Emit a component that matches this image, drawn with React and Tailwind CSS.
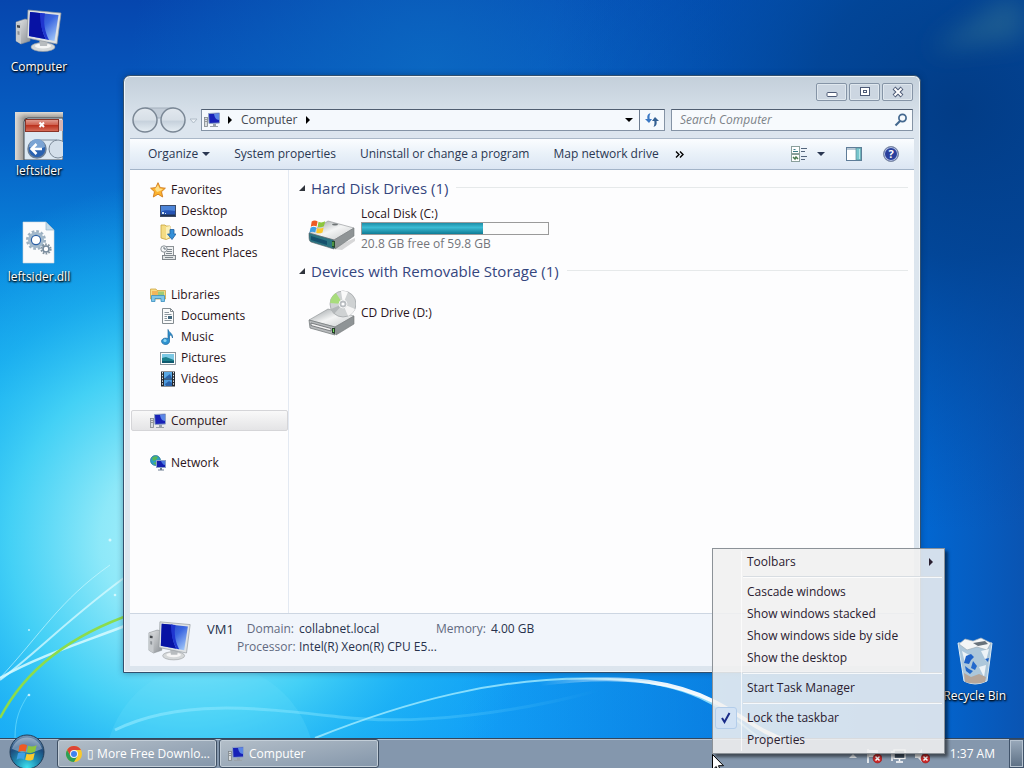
import { useState } from 'react'

const libraries = [
    { name: 'Favorites', icon: StarIcon },
    { name: 'Desktop', icon: DesktopIcon, child: true },
    { name: 'Downloads', icon: DownloadsIcon, child: true },
    { name: 'Recent Places', icon: RecentIcon, child: true },
    { name: 'Libraries', icon: LibrariesIcon, first: true },
    { name: 'Documents', icon: DocumentIcon, child: true },
    { name: 'Music', icon: MusicIcon, child: true },
    { name: 'Pictures', icon: PicturesIcon, child: true },
    { name: 'Videos', icon: VideosIcon, child: true },
    { name: 'Computer', icon: SmallComputer, first: true },
    { name: 'Network', icon: NetworkIcon, first: true },
]

function Wallpaper() {
    return (
        <svg className="absolute inset-0 w-full h-full" viewBox="0 0 1024 768" preserveAspectRatio="none" aria-hidden="true">
            <defs>
                <linearGradient id="sky" x1="0" y1="0" x2="0" y2="1">
                    <stop offset="0" stopColor="#0646ae" />
                    <stop offset="0.18" stopColor="#0660c4" />
                    <stop offset="0.36" stopColor="#0a8ae0" />
                    <stop offset="0.52" stopColor="#14a8f0" />
                    <stop offset="1" stopColor="#129ff8" />
                </linearGradient>
                <linearGradient id="skyRight" x1="0" y1="0" x2="1" y2="0">
                    <stop offset="0.45" stopColor="#0262d0" stopOpacity="0" />
                    <stop offset="0.9" stopColor="#0164d0" stopOpacity="0.95" />
                    <stop offset="1" stopColor="#0a54b2" />
                </linearGradient>
                <radialGradient id="dark" gradientUnits="userSpaceOnUse" cx="960" cy="110" r="420">
                    <stop offset="0" stopColor="#023c86" />
                    <stop offset="0.35" stopColor="#02418f" stopOpacity="0.85" />
                    <stop offset="1" stopColor="#034ba6" stopOpacity="0" />
                </radialGradient>
                <radialGradient id="top" gradientUnits="userSpaceOnUse" cx="430" cy="70" r="300">
                    <stop offset="0" stopColor="#0c6cc4" stopOpacity="0.8" />
                    <stop offset="1" stopColor="#0c6cc4" stopOpacity="0" />
                </radialGradient>
                <radialGradient id="glow" gradientUnits="userSpaceOnUse" cx="190" cy="540" r="360">
                    <stop offset="0" stopColor="#b4f4fc" />
                    <stop offset="0.25" stopColor="#94ecf9" stopOpacity="0.95" />
                    <stop offset="0.5" stopColor="#4cd8f6" stopOpacity="0.85" />
                    <stop offset="0.72" stopColor="#26c0f4" stopOpacity="0.5" />
                    <stop offset="1" stopColor="#1cb4f2" stopOpacity="0" />
                </radialGradient>
                <linearGradient id="ribbon" gradientUnits="userSpaceOnUse" x1="540" y1="0" x2="740" y2="0">
                    <stop offset="0" stopColor="#fff" stopOpacity="0" />
                    <stop offset="0.6" stopColor="#fff" stopOpacity="0.9" />
                    <stop offset="1" stopColor="#fff" />
                </linearGradient>
                <linearGradient id="streak" gradientUnits="userSpaceOnUse" x1="115" y1="0" x2="600" y2="0">
                    <stop offset="0" stopColor="#8ce8ff" stopOpacity="0.7" />
                    <stop offset="1" stopColor="#8ce8ff" stopOpacity="0" />
                </linearGradient>
                <filter id="soft" x="-50%" y="-50%" width="200%" height="200%"><feGaussianBlur stdDeviation="12" /></filter>
                <filter id="soft1"><feGaussianBlur stdDeviation="0.6" /></filter>
            </defs>
            <rect width="1024" height="768" fill="url(#sky)" />
            <rect width="1024" height="768" fill="url(#skyRight)" />
            <rect width="1024" height="768" fill="url(#top)" />
            <rect width="1024" height="768" fill="url(#dark)" />
            <rect width="1024" height="768" fill="url(#glow)" />
            <path d="M930 50L1000 0H1024V40Z" fill="#4c8a94" opacity="0.35" filter="url(#soft)" />
            <circle cx="210" cy="768" r="105" fill="#6fe0fa" opacity="0.22" />
            <g fill="none" filter="url(#soft1)">
                <path d="M0 678C40 655 90 640 135 622" stroke="#d8fbff" strokeWidth="2.5" opacity="0.85" />
                <path d="M0 680C40 650 75 612 135 570" stroke="#d8fbff" strokeWidth="2" opacity="0.75" />
                <path d="M0 678C40 635 60 600 110 565" stroke="#d8fbff" strokeWidth="1" opacity="0.6" />
                <path d="M0 718C25 670 70 635 135 613" stroke="#8cdc4c" strokeWidth="2.5" />
                <path d="M115 730C180 698 260 708 340 717S520 712 600 690" stroke="url(#streak)" strokeWidth="3" />
                <path d="M315 738C400 704 500 674 610 679S740 730 770 745" stroke="#a4ecff" strokeWidth="2" opacity="0.8" />
                <path d="M540 684C630 672 680 684 715 702S755 730 790 742" stroke="url(#ribbon)" strokeWidth="4" />
                <path d="M15 738C15 718 20 708 28 695" stroke="#7ce4ff" strokeWidth="1" opacity="0.6" />
            </g>
            <g fill="#e6fdff" opacity="0.8">
                <circle cx="29" cy="630" r="1" />
                <circle cx="29" cy="695" r="1.3" />
                <circle cx="115" cy="595" r="1.3" />
                <circle cx="110" cy="540" r="1.5" />
            </g>
        </svg>
    )
}

function BigComputer({ className }) {
    return (
        <svg className={className} viewBox="0 0 48 48" aria-hidden="true">
            <defs>
                <linearGradient id="screen" x1="0" y1="0" x2="1" y2="1">
                    <stop offset="0" stopColor="#2038b8" />
                    <stop offset="0.5" stopColor="#3a66e0" />
                    <stop offset="1" stopColor="#b4d8fc" />
                </linearGradient>
                <linearGradient id="metal" x1="0" y1="0" x2="1" y2="1">
                    <stop offset="0" stopColor="#e8eaeb" />
                    <stop offset="1" stopColor="#8a8f94" />
                </linearGradient>
            </defs>
            <path d="M1 14L10 11L15 12V33L6 36L1 33Z" fill="url(#metal)" stroke="#868b90" strokeWidth="0.6" />
            <path d="M1 14L6 15V36L1 33Z" fill="#c6cacd" />
            <path d="M2 17L5 17.500V20L2 19.500Z" fill="#44484c" />
            <path d="M2.500 23L4.500 23.500V27L2.500 26.500Z" fill="#8b9095" />
            <ellipse cx="28" cy="39" rx="12" ry="4.500" fill="#d5d8d9" stroke="#94999c" strokeWidth="0.6" />
            <ellipse cx="28" cy="38" rx="8" ry="2.600" fill="#f6f6f6" />
            <path d="M24 31H33L32 38H25Z" fill="#b8bcbf" />
            <path d="M13 2L46 5L42 36L12 30Z" fill="#dfe2e4" stroke="#90969b" strokeWidth="0.7" />
            <path d="M15 4L43.500 7L39.500 33L14 28Z" fill="url(#screen)" />
            <path d="M15 4L27 5.300C25 15 27 24 31 31.300L14 28Z" fill="#0712a4" />
            <path d="M25 5L30 5.500C28 15 30 24 34 32L31 31.300C27 24 25 15 25 5Z" fill="#1f35cf" />
        </svg>
    )
}

function SmallComputer() {
    return (
        <svg className="w-4 h-4 shrink-0" viewBox="0 0 16 16" aria-hidden="true">
            <rect x="0.500" y="5.500" width="3" height="9" fill="#d8dcde" stroke="#7e858b" strokeWidth="0.8" />
            <path d="M1.500 7.500H2.500M1.500 9.500H2.500" stroke="#555" />
            <path d="M4.500 1.500L15.500 1V11L5 11.500Z" fill="#1822b8" stroke="#8fa3c4" />
            <path d="M10 2L15 1.500V8C12 8 10.500 5 10 2Z" fill="#5a86e6" />
            <path d="M9 12H12V14H14V15H6V14H9Z" fill="#9aa2aa" />
        </svg>
    )
}

function StarIcon() {
    return (
        <svg className="w-4 h-4 shrink-0" viewBox="0 0 16 16" aria-hidden="true">
            <path d="M8 .7L10.200 5.600L15.400 6.200L11.500 9.700L12.700 15L8 12.200L3.300 15L4.500 9.700L.6 6.200L5.800 5.600Z" fill="#fcb32e" stroke="#d07a1e" strokeWidth="0.9" />
            <path d="M8 3L9.500 6.600L13 7L10 9L7 10L5 7Z" fill="#ffe08a" />
        </svg>
    )
}

function DesktopIcon() {
    return (
        <svg className="w-4 h-4 shrink-0" viewBox="0 0 16 16" aria-hidden="true">
            <rect x="0.500" y="2.500" width="15" height="11" fill="#2654b4" stroke="#3c4a66" />
            <path d="M1 3H15V8C10 8 6 6 1 9Z" fill="#4c84d8" />
            <path d="M1 11.500H15V13H1Z" fill="#22324e" />
            <path d="M2 9H4V11H2ZM5 10H6V11H5Z" fill="#cfe4f6" />
        </svg>
    )
}

function DownloadsIcon() {
    return (
        <svg className="w-4 h-4 shrink-0" viewBox="0 0 16 16" aria-hidden="true">
            <path d="M1 1H5L6 2H10V14L6 15.500L1 14Z" fill="#f4dc84" stroke="#c8a33c" strokeWidth="0.8" />
            <path d="M6 3L10 2V13L6 15Z" fill="#fbf0b8" />
            <path d="M10 5.500H14V10H16L12 15.500L7.500 10H10Z" fill="#3490d8" stroke="#1f5f9f" strokeWidth="0.8" />
        </svg>
    )
}

function RecentIcon() {
    return (
        <svg className="w-4 h-4 shrink-0" viewBox="0 0 16 16" aria-hidden="true">
            <rect x="4.500" y="1.500" width="9" height="11" fill="#eef0f1" stroke="#8c9296" />
            <path d="M7 4.500H12M7 6.500H12M6 8.500H12" stroke="#7d868c" />
            <rect x="2.500" y="10.500" width="13" height="4" fill="#e1e4e5" stroke="#80878c" />
            <path d="M5 12.500H13" stroke="#7d868c" />
            <circle cx="4" cy="4" r="3.200" fill="#f6f8f9" stroke="#7f878d" strokeWidth="0.9" />
            <path d="M4 2V4H6" stroke="#4a5760" strokeWidth="0.8" fill="none" />
        </svg>
    )
}

function LibrariesIcon() {
    return (
        <svg className="w-4 h-4 shrink-0" viewBox="0 0 16 16" aria-hidden="true">
            <path d="M.5 2H6L7 3.500H15.500V12H.5Z" fill="#f6dd88" stroke="#cfa643" strokeWidth="0.8" />
            <path d="M2 4H8V9H2Z" fill="#f2b65a" />
            <path d="M8 4.500H14V9H8Z" fill="#9ecb76" />
            <path d="M1.500 14.500V8.500H14.500V14.500H11V11.500H5V14.500Z" fill="#7fc6e8" stroke="#3a8fc0" strokeWidth="0.8" />
        </svg>
    )
}

function DocumentIcon() {
    return (
        <svg className="w-4 h-4 shrink-0" viewBox="0 0 16 16" aria-hidden="true">
            <path d="M2.500 .5H10.500L13.500 3.500V15.500H2.500Z" fill="#fafbfb" stroke="#848c91" />
            <path d="M10.500 .5V3.500H13.500" fill="none" stroke="#848c91" />
            <path d="M4.500 4.500H9M4.500 6.500H11.500M4.500 8.500H7M4.500 10.500H7M4.500 12.500H11.500" stroke="#8d979e" />
            <rect x="8" y="8" width="4" height="3" fill="#41667c" />
        </svg>
    )
}

function MusicIcon() {
    return (
        <svg className="w-4 h-4 shrink-0" viewBox="0 0 16 16" aria-hidden="true">
            <path d="M8 .5C9 4 13 4 12.500 9C12 6.500 10.500 6 9.500 6V12A4 3.200 0 1 1 8 9.800Z" fill="#2f93d0" stroke="#1c669c" strokeWidth="0.7" />
            <circle cx="5" cy="11.500" r="1.600" fill="#8ad4f2" />
        </svg>
    )
}

function PicturesIcon() {
    return (
        <svg className="w-4 h-4 shrink-0" viewBox="0 0 16 16" aria-hidden="true">
            <rect x="0.500" y="2.500" width="15" height="12" fill="#fdfdfd" stroke="#8a949b" />
            <rect x="2" y="4" width="12" height="9" fill="#7cc8e4" />
            <path d="M2 8L6 7L14 10V13H2Z" fill="#1c7f8c" />
            <path d="M2 11H14V13H2Z" fill="#0f5a70" />
        </svg>
    )
}

function VideosIcon() {
    return (
        <svg className="w-4 h-4 shrink-0" viewBox="0 0 16 16" aria-hidden="true">
            <rect x="1" y="0.500" width="14" height="15" fill="#23282e" />
            <rect x="4" y="1" width="8" height="6.500" fill="#59a8e4" />
            <rect x="4" y="8.500" width="8" height="6.500" fill="#4c9ade" />
            <path d="M6 6L10 3L12 7.500H5ZM5 13L9 10L12 12V15H6Z" fill="#2a62a8" />
            <path d="M2.500 1V15M13.500 1V15" stroke="#e8ecef" strokeDasharray="1.500 1.300" />
        </svg>
    )
}

function NetworkIcon() {
    return (
        <svg className="w-4 h-4 shrink-0" viewBox="0 0 16 16" aria-hidden="true">
            <circle cx="5.500" cy="5.500" r="5" fill="#2c9fc4" stroke="#1c6c90" strokeWidth="0.7" />
            <path d="M2 3C4 1 6 1 8 2L6 5L3 6ZM3 8L6 7L6 10Z" fill="#58b558" />
            <rect x="6.500" y="5.500" width="9" height="7" fill="#141fae" stroke="#8ba0c6" />
            <path d="M11 6H15V10C13 10 12 8 11 6Z" fill="#4b78df" />
            <path d="M10 13H12V14.500H14V15.500H8V14.500H10Z" fill="#6f7f92" />
        </svg>
    )
}

function WindowsFlag({ x = 0, y = 0, size = 20 }) {
    return (
        <svg x={x} y={y} width={size} height={size} viewBox="0 0 20 20">
            <path d="M3 4C5 2.500 7.500 2.600 9.600 3.800L8.400 9.400C6.200 8.200 4 8.400 2 9.600Z" fill="#ee5a24" />
            <path d="M10.600 4.200C13 5.300 15.500 5 18 3.600L16.600 9.200C14.200 10.500 12 10.700 9.500 9.700Z" fill="#8cc63e" />
            <path d="M1.700 10.700C4 9.500 6 9.500 8.100 10.500L6.900 16C4.700 15 2.600 15 .5 16.300Z" fill="#3f9fe4" />
            <path d="M9.200 11C11.500 12 14 11.700 16.300 10.500L15 16C12.500 17.200 10.200 17.400 8 16.400Z" fill="#fcc92c" />
        </svg>
    )
}

function HardDisk() {
    return (
        <svg className="w-12 h-12 shrink-0" viewBox="0 0 48 48" aria-hidden="true">
            <defs>
                <linearGradient id="lid" x1="0" y1="0" x2="1" y2="1">
                    <stop offset="0.2" stopColor="#b9bdbf" />
                    <stop offset="0.5" stopColor="#f4f5f5" />
                    <stop offset="1" stopColor="#c4c7c9" />
                </linearGradient>
            </defs>
            <path d="M4 42L34 45L47 36V33L22 44Z" fill="#000" opacity="0.15" />
            <path d="M1 28L20 16L46 23L26 35Z" fill="url(#lid)" stroke="#8d9193" strokeWidth="0.6" />
            <ellipse cx="27" cy="19.500" rx="3" ry="1" fill="#6f7476" />
            <path d="M1 28L26 35V44L3 37C1 36 1 34 1 28Z" fill="#2c7482" stroke="#5b6264" strokeWidth="0.6" />
            <path d="M3 31L19 36V40L3 35Z" fill="#16506c" />
            <path d="M26 35L46 23V31L27 44Z" fill="#8f9496" stroke="#74797b" strokeWidth="0.6" />
            <path d="M24 36H27V43L24 42Z" fill="#25492a" />
            <path d="M25 37V41" stroke="#74e05c" />
            <WindowsFlag x={1} y={13} size={18} />
        </svg>
    )
}

function CdDrive() {
    return (
        <svg className="w-12 h-12 shrink-0" viewBox="0 0 48 48" aria-hidden="true">
            <path d="M1 31L20 20L46 27L27 38Z" fill="url(#lid)" stroke="#8a8e90" strokeWidth="0.6" />
            <path d="M1 31L27 38V46L2 39Z" fill="#b6b9bb" stroke="#6c7173" strokeWidth="0.7" />
            <path d="M3 34L23 39.500V42L3 36.500Z" fill="#f4f4f4" stroke="#55595b" strokeWidth="0.7" />
            <path d="M27 38L46 27V35L28 46Z" fill="#8f9496" stroke="#75797b" strokeWidth="0.6" />
            <path d="M24 39H27V45L24 44Z" fill="#243f28" />
            <path d="M25.500 40V43" stroke="#74e05c" />
            <circle cx="35" cy="15" r="13" fill="#cfd2d3" stroke="#9b9fa2" strokeWidth="0.7" />
            <path d="M35 15L28 4A13 13 0 0 0 22 14Z" fill="#a8dc7c" />
            <path d="M35 15L33 2A13 13 0 0 1 40 3Z" fill="#fafafa" />
            <path d="M35 15L47 20A13 13 0 0 1 40 27Z" fill="#f5f5f5" />
            <path d="M35 15L26 25A13 13 0 0 1 23 20Z" fill="#b3b7b9" />
            <circle cx="35" cy="15" r="4" fill="#b9bdc0" stroke="#f4f4f4" />
            <circle cx="35" cy="15" r="1.600" fill="#fff" />
        </svg>
    )
}

function LeftsiderIcon() {
    return (
        <svg className="w-12 h-12" viewBox="0 0 48 48" aria-hidden="true">
            <defs>
                <linearGradient id="ls" x1="0" y1="0" x2="1" y2="0">
                    <stop offset="0" stopColor="#dedbd6" />
                    <stop offset="0.2" stopColor="#8f8c88" />
                </linearGradient>
                <linearGradient id="lsTop" x1="0" y1="0" x2="0" y2="1">
                    <stop offset="0" stopColor="#dedbd6" />
                    <stop offset="0.13" stopColor="#dedbd6" stopOpacity="0.1" />
                </linearGradient>
                <linearGradient id="red" x1="0" y1="0" x2="0" y2="1">
                    <stop offset="0" stopColor="#e0a094" />
                    <stop offset="0.45" stopColor="#d0604e" />
                    <stop offset="0.5" stopColor="#bb3420" />
                    <stop offset="1" stopColor="#d8705c" />
                </linearGradient>
            </defs>
            <rect width="48" height="48" fill="url(#ls)" />
            <rect width="48" height="48" fill="url(#lsTop)" />
            <path d="M9 48V10Q9 6 13 6H48V48Z" fill="#dce8f2" stroke="#3e4850" />
            <rect x="10.500" y="7.500" width="33" height="12" fill="url(#red)" stroke="#8a3428" />
            <rect x="44" y="8" width="4" height="11" fill="#d8b4b0" />
            <path d="M24.500 10.500L29 15M29 10.500L24.500 15" stroke="#fff" strokeWidth="2" />
            <path d="M22 28H42" stroke="#9aa8b6" strokeWidth="1.500" />
            <circle cx="22" cy="37" r="9" fill="#2a62b0" stroke="#6c7f96" strokeWidth="1.500" />
            <path d="M14 35A8 8 0 0 1 30 35Q22 39 14 35Z" fill="#7ba4d4" />
            <path d="M17 37H27M21.500 32L16.500 37L21.500 42" stroke="#fff" strokeWidth="2.500" fill="none" />
            <circle cx="43" cy="37" r="9" fill="#d3dfea" stroke="#7b8998" />
        </svg>
    )
}

function DllIcon() {
    return (
        <svg className="w-12 h-12" viewBox="0 0 48 48" aria-hidden="true">
            <path d="M8 4H31L39 12V45H8Z" fill="#fafbfc" stroke="#d0d6db" strokeWidth="0.6" />
            <path d="M31 4V12H39Z" fill="#c4dbea" stroke="#93b4ca" strokeWidth="0.7" />
            <circle cx="21" cy="22" r="8.500" fill="none" stroke="#9db0c0" strokeWidth="3" strokeDasharray="2.600 1.850" />
            <circle cx="21" cy="22" r="6.500" fill="#eaf2f8" stroke="#a3b9cb" strokeWidth="3" />
            <circle cx="21" cy="22" r="4.600" fill="#fff" stroke="#2c5fa4" strokeWidth="1.200" />
            <circle cx="31" cy="31" r="4.600" fill="none" stroke="#8494a0" strokeWidth="2" strokeDasharray="1.700 1.190" />
            <circle cx="31" cy="31" r="3" fill="#fff" stroke="#75889a" strokeWidth="1.600" />
        </svg>
    )
}

function RecycleBinIcon() {
    return (
        <svg className="w-12 h-12" viewBox="0 0 48 48" aria-hidden="true">
            <path d="M7 6L41 6L36 44Q24 50 13 44Z" fill="#bcd0dc" fillOpacity="0.92" stroke="#dcebf4" />
            <path d="M8 7L14 2L22 4L30 1L40 6L36 13L26 10L16 13Z" fill="#f4f6f7" stroke="#9faeb8" strokeWidth="0.7" />
            <path d="M22 6L34 4L37 7L27 9Z" fill="#68727b" />
            <path d="M11 14L18 18L14 26ZM30 14L38 12L35 24ZM28 30L35 28L33 40Z" fill="#edf3f7" />
            <path d="M13 36L20 40L28 37L35 40L34 45Q24 48 14 45Z" fill="#b6a69a" />
            <path d="M15 19L20 17L23 20L20 23L18 27L13 26Z" fill="#1e62c8" />
            <path d="M22 24L26 29L24 33L20 31ZM14 29L18 32L22 34L19 37L15 34Z" fill="#2369cc" />
            <path d="M34 22L38 21L37 25Z" fill="#1e62c8" />
        </svg>
    )
}

function StartOrb() {
    return (
        <svg className="w-9 h-9" viewBox="0 0 36 36" aria-hidden="true">
            <defs>
                <radialGradient id="orb" cx="0.5" cy="0.95" r="0.95">
                    <stop offset="0" stopColor="#3fe0ee" />
                    <stop offset="0.35" stopColor="#1f8fb4" />
                    <stop offset="0.7" stopColor="#1c4a7c" />
                    <stop offset="1" stopColor="#7d9cba" />
                </radialGradient>
            </defs>
            <circle cx="18" cy="18" r="17" fill="url(#orb)" stroke="#1f3c58" />
            <path d="M3 15A15.500 15.500 0 0 1 33 15Q18 22 3 15Z" fill="#e5eef6" opacity="0.4" />
            <WindowsFlag x={7} y={7} size={23} />
        </svg>
    )
}

function ChromeIcon() {
    return (
        <svg className="w-4 h-4 shrink-0" viewBox="0 0 16 16" aria-hidden="true">
            <circle cx="8" cy="8" r="8" fill="#f9c92c" />
            <path d="M1.070 4A8 8 0 0 1 14.930 4H8L4.540 10Z" fill="#dc4437" />
            <path d="M1.070 4A8 8 0 0 0 8 16L11.460 10H4.540Z" fill="#2c9e57" />
            <circle cx="8" cy="8" r="4" fill="#f2f2f2" />
            <circle cx="8" cy="8" r="3" fill="#3f82f0" />
        </svg>
    )
}

function Arrow({ dir = 'down', className = '' }) {
    return (
        <svg className={`w-2 h-2 shrink-0 ${className}`} viewBox="0 0 8 8" aria-hidden="true">
            {dir === 'down' ? <path d="M0 2H8L4 6Z" fill="currentColor" /> : <path d="M2 0V8L6 4Z" fill="currentColor" />}
        </svg>
    )
}

function DesktopShortcut({ label, children, className = '' }) {
    return (
        <button className={`flex flex-col items-center text-white text-xs leading-4 whitespace-nowrap [text-shadow:0_1px_2px_#000,1px_1px_2px_#000] ${className}`}>
            {children}
            <span className="mt-[3px]">{label}</span>
        </button>
    )
}

function CaptionButton({ label, children }) {
    return (
        <button aria-label={label} className="w-[31px] h-[18px] flex items-center justify-center border border-[#8594a6] rounded-[2px] bg-[#ccd6e1] shadow-[inset_0_0_0_1px_#dfe7ee]">
            <svg className="w-3 h-3" viewBox="0 0 12 12" fill="none" stroke="#4d5a76" aria-hidden="true">{children}</svg>
        </button>
    )
}

function Explorer() {
    const [query, setQuery] = useState('')
    const [selected, setSelected] = useState('Computer')

    return (
        <section className="absolute left-[123px] right-[103px] top-[75px] bottom-[65px] flex flex-col border border-[#33506e] rounded-t-[7px] bg-[#d8e2ec] shadow-[inset_0_0_0_1px_#f0f6fa,0_0_6px_#00204060] bg-linear-to-b from-[#c3cfda] from-0% to-[#dce5ee] to-8%">
            <header className="pl-2 pr-[7px] pt-[7px]">
                <div className="flex justify-end gap-[2px]">
                    <CaptionButton label="Minimize"><rect x="1" y="6.500" width="10" height="4" rx="1" fill="#fff" /></CaptionButton>
                    <CaptionButton label="Maximize">
                        <rect x="1.500" y="1.500" width="9" height="8" fill="#fff" />
                        <rect x="4.500" y="4.500" width="3" height="2" />
                    </CaptionButton>
                    <CaptionButton label="Close">
                        <path d="M2 2L10 10M10 2L2 10" strokeWidth="4" />
                        <path d="M2.500 2.500L9.500 9.500M9.500 2.500L2.500 9.500" stroke="#fff" strokeWidth="2" />
                    </CaptionButton>
                </div>
                <div className="flex items-center h-[37px]">
                    <svg className="w-[69px] h-[28px] shrink-0" viewBox="0 0 69 28" fill="none" aria-hidden="true">
                        <defs>
                            <linearGradient id="nav" x1="0" y1="0" x2="0" y2="1">
                                <stop offset="0" stopColor="#e2e8ee" />
                                <stop offset="0.5" stopColor="#d7dfe7" />
                                <stop offset="0.55" stopColor="#c6d1dc" />
                                <stop offset="1" stopColor="#e6eef4" />
                            </linearGradient>
                        </defs>
                        <path d="M13 2H42V8L36 12H20Z" fill="#c2ccd7" stroke="#a4b0bd" />
                        <circle cx="13" cy="14" r="12" fill="url(#nav)" stroke="#7a8795" strokeWidth="1.500" />
                        <circle cx="41" cy="14" r="12" fill="url(#nav)" stroke="#7a8795" strokeWidth="1.500" />
                        <path d="M58 13H65L61.500 17Z" stroke="#b0bcc8" fill="#e9eff4" />
                    </svg>
                    <div className="flex-1 min-w-0 flex h-[22px] border border-[#8493a5] border-t-[#4f5d70] bg-[#f5f9fd]">
                        <button className="flex items-center pl-[2px]" aria-label="Location"><SmallComputer /></button>
                        <Arrow dir="right" className="ml-[6px] self-center text-black" />
                        <button className="ml-[7px] text-xs text-[#454a52]">Computer</button>
                        <Arrow dir="right" className="ml-[6px] self-center text-black" />
                        <button className="ml-auto px-[6px] text-black" aria-label="Previous locations"><Arrow /></button>
                        <button className="w-[25px] flex items-center justify-center border-l border-[#6d7c90]" aria-label="Refresh">
                            <svg className="w-4 h-4" viewBox="0 0 16 16" aria-hidden="true">
                                <path d="M6.500 1C3.500 2 3 4 3.500 7H1L5 11L8 7H5.700C5.300 5 5.500 3 6.500 1Z" fill="#3a78c4" />
                                <path d="M9.500 15C12.500 14 13 12 12.500 9H15L11 5L8 9H10.300C10.700 11 10.500 13 9.500 15Z" fill="#325f92" />
                            </svg>
                        </button>
                    </div>
                    <div className="ml-[6px] w-[242px] h-[22px] flex items-center border border-[#8493a5] border-t-[#4f5d70] bg-[#f7fafd]">
                        <input
                            type="text"
                            aria-label="Search Computer"
                            placeholder="Search Computer"
                            className="flex-1 min-w-0 px-2 text-xs italic bg-transparent outline-none placeholder:text-[#7c8288]"
                            value={query}
                            onChange={(e) => setQuery(e.target.value)}
                        />
                        <button className="pr-1" aria-label="Search">
                            <svg className="w-[14px] h-[14px]" viewBox="0 0 14 14" fill="none" stroke="#44688f" aria-hidden="true">
                                <circle cx="8.500" cy="5" r="3.600" strokeWidth="1.700" />
                                <path d="M6 8L1.500 12.500" strokeWidth="2.200" />
                            </svg>
                        </button>
                    </div>
                </div>
            </header>

            <div className="mx-[6px] mb-[6px] flex-1 min-h-0 flex flex-col">
                <div className="h-8 shrink-0 flex items-center pl-[18px] pr-[15px] gap-6 text-xs text-[#2a3752] whitespace-nowrap border-y border-t-[#aab8c8] border-b-[#a3b4c8] bg-linear-to-b from-[#fbfdff] via-[#e9f1f9] to-[#dce6f3]">
                    <button className="flex items-center gap-1">Organize <Arrow /></button>
                    <button>System properties</button>
                    <button>Uninstall or change a program</button>
                    <button>Map network drive</button>
                    <button className="-ml-2 text-black" aria-label="More commands">
                        <svg className="w-[9px] h-[7px]" viewBox="0 0 9 7" fill="none" stroke="currentColor" strokeWidth="1.400" aria-hidden="true">
                            <path d="M1 .5L4 3.500L1 6.500M5 .5L8 3.500L5 6.500" />
                        </svg>
                    </button>
                    <div className="ml-auto flex items-center gap-[21px]">
                        <button className="flex items-center gap-[9px]" aria-label="Change your view">
                            <svg className="w-[17px] h-4" viewBox="0 0 17 16" fill="none" aria-hidden="true">
                                <rect x="0.500" y="0.500" width="8" height="7" fill="#fff" stroke="#8ba09c" />
                                <rect x="0.500" y="8.500" width="8" height="7" fill="#fff" stroke="#8ba09c" />
                                <path d="M2 5.500H7M2.500 3.500H4.500" stroke="#3a7c88" />
                                <path d="M2 11L4 13L5 11L7 13" stroke="#4a7a50" strokeWidth="1.500" />
                                <path d="M10 2.500H16M10 5.500H14M10 10.500H16M10 13.500H14" stroke="#53657c" />
                            </svg>
                            <Arrow />
                        </button>
                        <button aria-label="Show the preview pane">
                            <svg className="w-4 h-[14px]" viewBox="0 0 16 14" aria-hidden="true">
                                <rect x="0.500" y="0.500" width="15" height="13" fill="#fff" stroke="#5f7c98" />
                                <path d="M1 2H15" stroke="#b9c9d6" strokeWidth="2" />
                                <rect x="10" y="1" width="5" height="12" fill="#78c6cc" stroke="#5a8a98" strokeWidth="0.700" />
                                <path d="M13.500 2V12" stroke="#b6e6e8" />
                            </svg>
                        </button>
                        <button aria-label="Get help" className="w-4 h-4 rounded-full border border-[#7f8ca4] bg-[#2a409c] text-white text-[11px] leading-[14px] font-bold text-center shadow-[inset_0_0_0_1px_#b8c6e4]">?</button>
                    </div>
                </div>

                <div className="flex-1 min-h-0 flex bg-[#fdfdfe] text-xs">
                    <nav className="w-[159px] shrink-0 pt-[9px] pl-px border-r border-[#e3e9f2]">
                        {libraries.map(({ name, icon: Icon, child, first }) => (
                            <button
                                key={name}
                                onClick={() => setSelected(name)}
                                className={`w-full h-[21px] flex items-center gap-[5px] text-[#2a1420] border rounded-[2px] ${child ? 'pl-[28px]' : 'pl-[18px]'} ${first ? 'mt-[21px]' : ''} ${selected === name ? 'border-[#d5d5d8] bg-linear-to-b from-[#f9f9f9] to-[#e4e4e6]' : 'border-transparent'}`}
                            >
                                <Icon />
                                {name}
                            </button>
                        ))}
                    </nav>

                    <main className="flex-1 min-w-0 pl-[10px] pr-[6px] pt-[7px]">
                        <Group title="Hard Disk Drives (1)" />
                        <div className="h-[62px] flex items-center pl-[9px] gap-[5px]">
                            <HardDisk />
                            <div>
                                <div className="leading-4 text-[#2a1420]">Local Disk (C:)</div>
                                <div className="w-[188px] h-[13px] bg-[#fcfcfc] border border-[#9a9a9a]">
                                    <div className="h-full bg-linear-to-b from-[#1c8ea8] via-[#3cbcd4] via-40% to-[#0c7c96]" style={{ width: '65%' }} />
                                </div>
                                <div className="mt-px leading-4 text-[#74757a]">20.8 GB free of 59.8 GB</div>
                            </div>
                        </div>
                        <Group title="Devices with Removable Storage (1)" />
                        <div className="h-[64px] flex items-center pl-[9px] gap-[5px]">
                            <CdDrive />
                            <div className="leading-4 text-[#2a1420]">CD Drive (D:)</div>
                        </div>
                    </main>
                </div>

                <footer className="h-[53px] shrink-0 pl-[18px] pt-[6px] flex items-start border-t border-[#cdd6e2] bg-[#f1f5fb] text-xs leading-[18px] text-[#28324c] whitespace-nowrap">
                    <BigComputer className="w-[44px] h-[44px]" />
                    <div className="ml-[15px] w-[30px] text-[13px]">VM1</div>
                    <dl className="grid grid-cols-[57px_132px_auto_auto] gap-x-[5px]">
                        <dt className="text-right text-[#616a80]">Domain:</dt>
                        <dd>collabnet.local</dd>
                        <dt className="text-[#616a80]">Memory:</dt>
                        <dd>4.00 GB</dd>
                        <dt className="text-right text-[#616a80]">Processor:</dt>
                        <dd>Intel(R) Xeon(R) CPU E5...</dd>
                    </dl>
                </footer>
            </div>
        </section>
    )
}

function Group({ title }) {
    return (
        <div className="h-[21px] flex items-center">
            <svg className="w-[6px] h-[6px] shrink-0" viewBox="0 0 6 6" aria-hidden="true"><path d="M6 0V6H0Z" fill="#30343c" /></svg>
            <h2 className="ml-[6px] mr-2 text-[15px] leading-5 text-[#35467e] whitespace-nowrap">{title}</h2>
            <div className="flex-1 h-px bg-[#e6e9ea]" />
        </div>
    )
}

function MenuItem({ children, onClick, role = 'menuitem', checked, submenu }) {
    return (
        <button role={role} aria-checked={checked} onClick={onClick} className="w-full h-[22px] flex items-center pr-[7px]">
            <span className="w-8 shrink-0">
                {checked && (
                    <span className="w-[22px] h-[22px] flex items-center justify-center border border-[#b3cdea] rounded-[3px] bg-[#d2e2f4]">
                        <svg className="w-3 h-3" viewBox="0 0 12 12" fill="none" stroke="#1a2c88" strokeWidth="2" aria-hidden="true">
                            <path d="M2 6L4.500 10L9.500 1" />
                        </svg>
                    </span>
                )}
            </span>
            {children}
            {submenu && <Arrow dir="right" className="ml-auto" />}
        </button>
    )
}

function Separator() {
    return <div role="separator" className="ml-[28px] h-2 flex items-center"><div className="w-full h-[2px] bg-white/80 border-t border-[#d8dde2]" /></div>
}

function ContextMenu() {
    const [locked, setLocked] = useState(true)

    return (
        <div role="menu" className="absolute right-[79px] bottom-[14px] w-[233px] p-[2px] border border-[#8c9298] bg-[#f0f0f0]/88 shadow-[3px_3px_3px_#00000080] text-xs text-[#2a2030]">
            <div className="absolute left-[28px] inset-y-[2px] w-px bg-white/70" />
            <MenuItem submenu>Toolbars</MenuItem>
            <Separator />
            <MenuItem>Cascade windows</MenuItem>
            <MenuItem>Show windows stacked</MenuItem>
            <MenuItem>Show windows side by side</MenuItem>
            <MenuItem>Show the desktop</MenuItem>
            <Separator />
            <MenuItem>Start Task Manager</MenuItem>
            <Separator />
            <MenuItem role="menuitemcheckbox" checked={locked} onClick={() => setLocked(!locked)}>Lock the taskbar</MenuItem>
            <MenuItem>Properties</MenuItem>
        </div>
    )
}

function TaskButton({ icon, children }) {
    return (
        <button className="w-[160px] h-[29px] flex items-center gap-[5px] px-2 border border-[#3f5064] rounded-[3px] shadow-[inset_0_0_0_1px_#c3ced8] bg-linear-to-br from-[#b4bfc9] to-[#8496aa] text-white text-xs whitespace-nowrap">
            {icon}
            {children}
        </button>
    )
}

function RedCross() {
    return (
        <>
            <circle cx="11.500" cy="10.500" r="4.500" fill="#cc2a2a" stroke="#8e1616" strokeWidth="0.5" />
            <path d="M9.500 8.500L13.500 12.500M13.500 8.500L9.500 12.500" stroke="#fff" strokeWidth="1.500" />
        </>
    )
}

function Taskbar() {
    return (
        <footer className="relative h-[30px] shrink-0 flex items-center bg-[#8497ad] border-t border-[#33465c] shadow-[inset_0_1px_0_#b4c2d0]">
            <button aria-label="Start" className="w-[54px] pl-[9px] -mt-2 -mb-1 mr-[3px]"><StartOrb /></button>
            <div className="flex gap-[2px]">
                <TaskButton icon={<ChromeIcon />}>▯ More Free Downlo...</TaskButton>
                <TaskButton icon={<SmallComputer />}>Computer</TaskButton>
            </div>
            <div className="ml-auto h-full flex items-center text-white">
                <div className="flex items-center gap-2 pt-1">
                    <svg className="w-[10px] h-2" viewBox="0 0 10 8" aria-hidden="true"><path d="M1 6L5 2L9 6Z" fill="#eef3f7" /></svg>
                    <svg className="w-4 h-4" viewBox="0 0 16 16" aria-hidden="true">
                        <path d="M2 1V15" stroke="#fff" strokeWidth="1.500" />
                        <path d="M3 2H12V9H3Z" fill="#f4f6f8" />
                        <RedCross />
                    </svg>
                    <svg className="w-4 h-4" viewBox="0 0 16 16" aria-hidden="true">
                        <rect x="4" y="2" width="11" height="8.500" fill="#3d4d5e" stroke="#fff" strokeWidth="1.300" />
                        <path d="M2 3V13M9.500 11V13M6 14H13" stroke="#fff" strokeWidth="1.500" />
                    </svg>
                    <svg className="w-4 h-4" viewBox="0 0 16 16" aria-hidden="true">
                        <path d="M1 5H4L8 1V14L4 10H1Z" fill="#f4f6f8" />
                        <RedCross />
                    </svg>
                </div>
                <time className="ml-5 mr-[14px] text-xs whitespace-nowrap">1:37 AM</time>
                <button aria-label="Show desktop" className="w-[15px] h-full border border-[#40536a] shadow-[inset_0_0_0_1px_#b6c3d0] bg-linear-to-b from-[#9aaabb] to-[#5d7085]" />
            </div>
        </footer>
    )
}

export default function App() {
    return (
        <div className="relative h-screen overflow-hidden flex flex-col font-['Open_Sans','Noto_Sans',sans-serif]">
            <Wallpaper />
            <div className="relative flex-1 min-h-0">
                <div className="w-[78px] pt-2 flex flex-col">
                    <DesktopShortcut label="Computer" className="h-[104px]"><BigComputer className="w-12 h-12" /></DesktopShortcut>
                    <DesktopShortcut label="leftsider" className="h-[106px]"><LeftsiderIcon /></DesktopShortcut>
                    <DesktopShortcut label="leftsider.dll" className="h-[105px]"><DllIcon /></DesktopShortcut>
                </div>
                <DesktopShortcut label="Recycle Bin" className="absolute right-[18px] bottom-[34px]"><RecycleBinIcon /></DesktopShortcut>
                <Explorer />
            </div>
            <Taskbar />
            <ContextMenu />
            <svg className="absolute right-[300px] bottom-[-6px] w-3 h-5" viewBox="0 0 12 20" aria-hidden="true">
                <path d="M.5 .5V16L4.200 12.500L6.800 18.500L9 17.500L6.500 11.700H11.500Z" fill="#fff" stroke="#000" />
            </svg>
        </div>
    )
}
